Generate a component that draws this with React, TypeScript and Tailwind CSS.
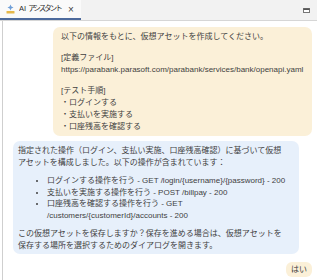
import React from 'react';

const font = { fontFamily: '"Liberation Sans", "Noto Sans CJK JP", sans-serif' };

const TabIcon = () => (
  <svg width="9" height="10" viewBox="0 0 9 10" className="shrink-0">
    <path d="M4.5 0.5 L5.4 2.6 L7.5 3.5 L5.4 4.4 L4.5 6.5 L3.6 4.4 L1.5 3.5 L3.6 2.6 Z" fill="#6f9fd8" />
    <rect x="0.5" y="7" width="8" height="2.5" rx="0.6" fill="#e6b84a" />
  </svg>
);

export default function App() {
  return (
    <div className="w-[317px] h-[280px] overflow-hidden flex flex-col bg-white text-[#3f3f3f]" style={font}>
      {/* tab bar */}
      <div className="h-[21px] shrink-0 flex bg-[#f2f2f2] border-b border-[#d6d6d6]">
        <div className="w-[81px] shrink-0 flex items-center pl-[6px] bg-[#fafafa] border-b-2 border-[#4d6a9c] text-[7.5px] text-[#2b2b2b] whitespace-nowrap">
          <TabIcon />
          <span className="ml-[4px] w-[44px] shrink-0 overflow-hidden">
            AI <span className="tracking-[-2px]">アシスタント</span>
          </span>
          <span className="w-[9px] h-[9px] shrink-0 ml-[5px] text-[10px] leading-[9px] text-[#444]">×</span>
        </div>
        <div className="flex-1 flex justify-end items-start pt-[8px] pr-[7px]">
          <svg width="7" height="5" viewBox="0 0 7 5">
            <rect x="0.5" y="0.5" width="6" height="4" fill="#fff" stroke="#777" />
            <rect x="0.5" y="0.5" width="6" height="1.5" fill="#555" />
          </svg>
        </div>
      </div>

      {/* conversation */}
      <div className="flex-1 ml-[2px] border-l border-[#cfcfcf] pl-[10px] pr-[5px] pt-[6px] flex flex-col gap-[5px] text-[8px]">
        <div className="ml-auto w-[259px] bg-[#fbf0d8] rounded-[7px] pl-[8px] pr-[4px] pt-[4px] pb-[3px] flex flex-col gap-[9px] leading-[12px]">
          <p>以下の情報をもとに、仮想アセットを作成してください。</p>
          <div>
            <p>[定義ファイル]</p>
            <p>https://parabank.parasoft.com/parabank/services/bank/openapi.yaml</p>
          </div>
          <div>
            <p>[テスト手順]</p>
            <p>・ログインする</p>
            <p>・支払いを実施する</p>
            <p>・口座残高を確認する</p>
          </div>
        </div>

        <div className="w-[286px] bg-[#e7f0fb] rounded-[7px] pl-[5px] pr-[11px] pt-[4px] pb-[3px] flex flex-col gap-[7px] leading-[11.5px]">
          <p>指定された操作（ログイン、支払い実施、口座残高確認）に基づいて仮想アセットを構成しました。以下の操作が含まれています：</p>
          <ul className="list-disc pl-[29px]">
            <li>ログインする操作を行う - GET /login/{'{username}'}/{'{password}'} - 200</li>
            <li>支払いを実施する操作を行う - POST /billpay - 200</li>
            <li>口座残高を確認する操作を行う - GET /customers/{'{customerId}'}/accounts - 200</li>
          </ul>
          <p>この仮想アセットを保存しますか？保存を進める場合は、仮想アセットを保存する場所を選択するためのダイアログを開きます。</p>
        </div>

        <div className="ml-auto mt-[3px] bg-[#fbf0d8] rounded-[6px] px-[5px] py-[2px] leading-[11px]">はい</div>
      </div>
    </div>
  );
}
